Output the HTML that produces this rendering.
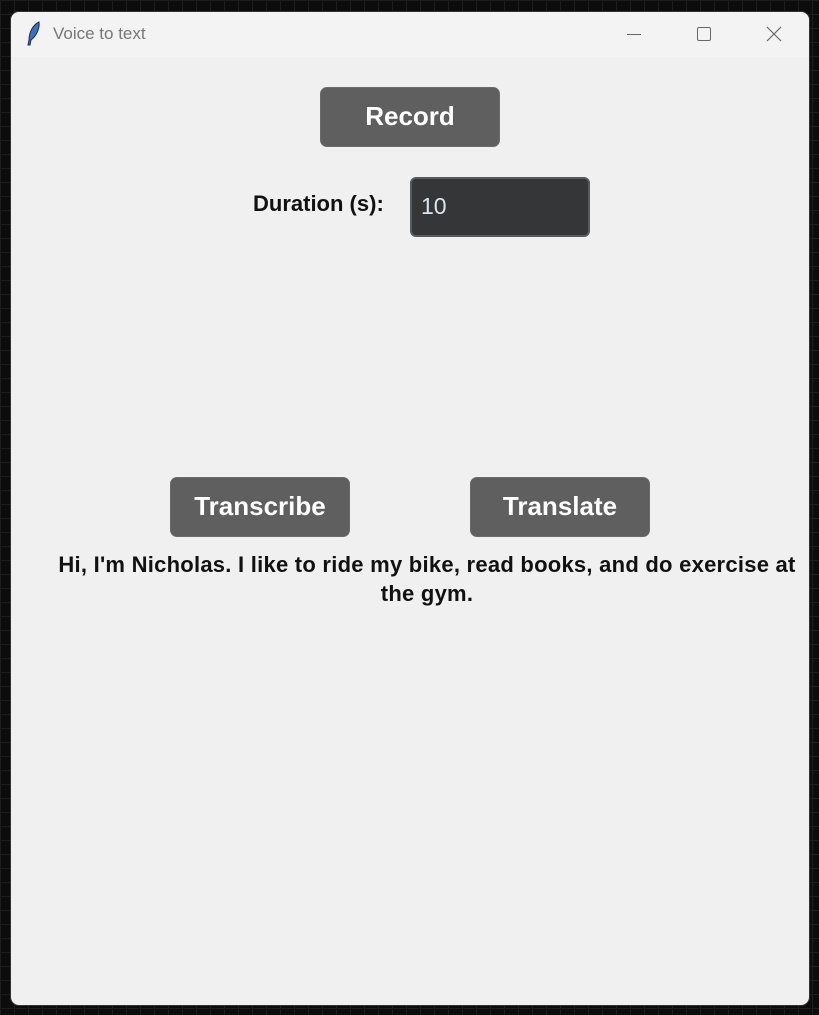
<!DOCTYPE html>
<html><head><meta charset="utf-8"><style>
html,body{margin:0;padding:0;}
body{width:819px;height:1015px;overflow:hidden;position:relative;background-color:#0c0c0c;
background-image:linear-gradient(#1e1e1e 1px,transparent 1px),linear-gradient(90deg,#1e1e1e 1px,transparent 1px);background-size:14px 14px;font-family:"Liberation Sans",sans-serif;}
.win{position:absolute;left:11px;top:12px;width:798px;height:993px;background:#f0f0f0;border-radius:8px;overflow:hidden;box-shadow:0 0 0 1px #333;}
.title{position:absolute;left:0;top:0;width:100%;height:45px;background:#f3f3f3;}
.title .t{position:absolute;left:42px;top:12px;font-size:17px;color:#777;}
.btn{position:absolute;background:#5f5f5f;border-radius:7px;color:#fff;font-size:26px;font-weight:bold;text-align:center;border:1px solid #6a6a6a;box-sizing:border-box;}
.lbl{position:absolute;font-size:22px;font-weight:bold;color:#111;}
</style></head><body>
<div class="win">
 <div class="title">
  <svg style="position:absolute;left:14px;top:9px" width="18" height="26" viewBox="0 0 18 26"><path d="M14 1 C8 4 4 11 4 19 L3 24 L5 24 L6 19 C11 15 15 8 14 1Z" fill="#3b6fc4" stroke="#1a2b50" stroke-width="1"/></svg>
  <div class="t">Voice to text</div>
  <div style="position:absolute;left:616px;top:22px;width:14px;height:1px;background:#666"></div>
  <div style="position:absolute;left:686px;top:15px;width:12px;height:12px;border:1.3px solid #666;border-radius:2px"></div>
  <svg style="position:absolute;left:755px;top:14px" width="16" height="16"><path d="M1 1L15 15M15 1L1 15" stroke="#666" stroke-width="1.2"/></svg>
 </div>
 <div class="btn" style="left:309px;top:75px;width:180px;height:60px;line-height:56px;">Record</div>
 <div class="lbl" style="left:242px;top:179px;">Duration (s):</div>
 <div style="position:absolute;left:399px;top:165px;width:180px;height:60px;background:#343638;border:2px solid #565b5e;border-radius:6px;box-sizing:border-box;color:#dce4ee;font-size:23px;line-height:54px;padding-left:9px;">10</div>
 <div class="btn" style="left:159px;top:465px;width:180px;height:60px;line-height:56px;">Transcribe</div>
 <div class="btn" style="left:459px;top:465px;width:180px;height:60px;line-height:56px;">Translate</div>
 <div class="lbl" style="left:40px;top:538px;width:752px;text-align:center;line-height:29px;letter-spacing:0.25px;">Hi, I'm Nicholas. I like to ride my bike, read books, and do exercise at the gym.</div>
</div>
</body></html>
